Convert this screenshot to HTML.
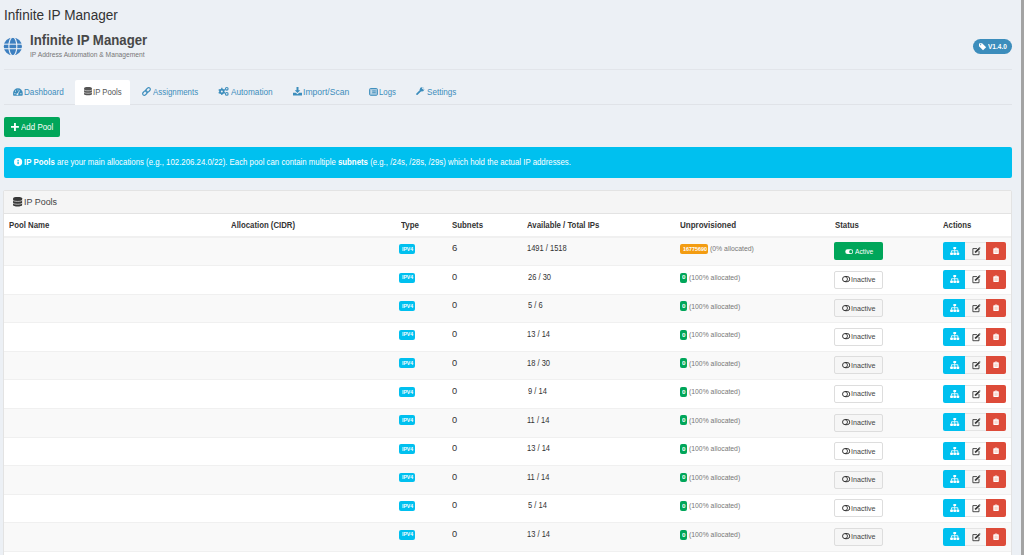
<!DOCTYPE html>
<html><head><meta charset="utf-8"><title>Infinite IP Manager</title>
<style>
html,body{margin:0;padding:0;}
body{width:1024px;height:555px;overflow:hidden;background:#ecf0f5;position:relative;font-family:"Liberation Sans",sans-serif;}
.t{position:absolute;line-height:1;white-space:nowrap;transform-origin:0 0;}
.b{position:absolute;}
.i{position:absolute;overflow:visible;}
</style></head><body>
<div class="t" style="left:3.84px;top:7.60px;font-size:14.535px;color:#333;transform:scaleX(0.9367);">Infinite IP Manager</div>
<svg class="i" style="left:3.40px;top:36.70px;width:19.70px;height:18.90px;" viewBox="0 0 20 20"><circle cx="10" cy="10" r="9.6" fill="#3c7fc0"/><ellipse cx="10" cy="10" rx="4.2" ry="9.9" fill="none" stroke="#ecf0f5" stroke-width="1.2"/><line x1="0" y1="7.6" x2="20" y2="7.6" stroke="#ecf0f5" stroke-width="1.1"/><line x1="0" y1="12.4" x2="20" y2="12.4" stroke="#ecf0f5" stroke-width="1.1"/></svg>
<div class="t" style="left:30.02px;top:33.10px;font-size:14.535px;color:#484848;font-weight:bold;transform:scaleX(0.9100);">Infinite IP Manager</div>
<div class="t" style="left:29.78px;top:51.87px;font-size:7.122px;color:#777;transform:scaleX(0.9395);">IP Address Automation &amp; Management</div>
<div class="b" style="left:972.70px;top:38.80px;width:39.30px;height:15.30px;background:#3c8dbc;border-radius:8px;"></div>
<svg class="i" style="left:978.50px;top:42.70px;width:7.60px;height:7.60px;" viewBox="0 0 16 16"><path d="M0 1.5V7l8.5 8.5 6.5-6.5L6.5 0.5H1z" fill="#fff"/><circle cx="3.5" cy="3.5" r="1.2" fill="#3c8dbc"/></svg>
<div class="t" style="left:987.86px;top:43.16px;font-size:7.849px;color:#fff;font-weight:bold;transform:scaleX(0.8335);">V1.4.0</div>
<div class="b" style="left:4.00px;top:69.00px;width:1008.00px;height:1.00px;background:#e2e5ea;"></div>
<div class="b" style="left:4.00px;top:103.80px;width:1008.00px;height:1.00px;background:#e0e3e8;"></div>
<div class="b" style="left:75.00px;top:79.80px;width:55.00px;height:24.80px;background:#fff;border-radius:2px 2px 0 0;"></div>
<svg class="i" style="left:13.30px;top:87.70px;width:9.80px;height:7.70px;color:#3c8dbc;--sep:#ecf0f5;" viewBox="0 0 20 16"><path d="M1.5 16Q0 16 0 14.5V10.5A10 10 0 0 1 20 10.5V14.5Q20 16 18.5 16Z" fill="currentColor"/><circle cx="3.8" cy="11.8" r="1.2" fill="#ecf0f5"/><circle cx="16.2" cy="11.8" r="1.2" fill="#ecf0f5"/><circle cx="5" cy="6.5" r="1.2" fill="#ecf0f5"/><circle cx="10" cy="4.2" r="1.1" fill="#ecf0f5"/><path d="M9 13.5L13.5 5" stroke="#ecf0f5" stroke-width="1.5"/><circle cx="9" cy="13" r="2" fill="#ecf0f5"/></svg>
<div class="t" style="left:24.33px;top:87.57px;font-size:9.012px;color:#3c8dbc;transform:scaleX(0.9026);">Dashboard</div>
<svg class="i" style="left:83.80px;top:87.20px;width:8.00px;height:8.30px;color:#555;--sep:#fff;" viewBox="0 0 16 17"><path d="M0 2.2C0 1 3.6 0 8 0s8 1 8 2.2v12.6c0 1.2-3.6 2.2-8 2.2s-8-1-8-2.2z" fill="currentColor"/><path d="M0 5.6c0 1.2 3.6 2.2 8 2.2s8-1 8-2.2M0 10.6c0 1.2 3.6 2.2 8 2.2s8-1 8-2.2" fill="none" stroke="var(--sep)" stroke-width="1.2"/></svg>
<div class="t" style="left:93.28px;top:87.57px;font-size:9.012px;color:#555;transform:scaleX(0.8610);">IP Pools</div>
<svg class="i" style="left:142.00px;top:87.00px;width:9.00px;height:9.00px;color:#3c8dbc;--sep:#ecf0f5;" viewBox="0 0 16 16"><rect x="-4.6" y="-2.9" width="9.2" height="5.8" rx="2.9" transform="translate(5.3 10.7) rotate(-45)" fill="none" stroke="currentColor" stroke-width="2.1"/><rect x="-4.6" y="-2.9" width="9.2" height="5.8" rx="2.9" transform="translate(10.7 5.3) rotate(-45)" fill="none" stroke="currentColor" stroke-width="2.1"/></svg>
<div class="t" style="left:152.88px;top:87.57px;font-size:9.012px;color:#3c8dbc;transform:scaleX(0.8762);">Assignments</div>
<svg class="i" style="left:218.30px;top:87.40px;width:10.70px;height:8.60px;color:#3c8dbc;--sep:#ecf0f5;" viewBox="0 0 21 17"><g fill="currentColor"><circle cx="7.5" cy="8.7" r="5.2"/><g stroke="currentColor" stroke-width="2.6"><path d="M7.5 1.6v14.2"/><path d="M1.35 5.15l12.3 7.1"/><path d="M1.35 12.25l12.3-7.1"/></g></g><circle cx="7.5" cy="8.7" r="2" fill="#ecf0f5"/><circle cx="17.3" cy="3.6" r="2.6" fill="none" stroke="currentColor" stroke-width="2.2"/><circle cx="17.3" cy="13.6" r="2.6" fill="none" stroke="currentColor" stroke-width="2.2"/></svg>
<div class="t" style="left:231.38px;top:87.57px;font-size:9.012px;color:#3c8dbc;transform:scaleX(0.9159);">Automation</div>
<svg class="i" style="left:293.00px;top:87.20px;width:9.00px;height:8.60px;color:#3c8dbc;--sep:#ecf0f5;" viewBox="0 0 18 17"><path d="M7 0h4v6.5h3.5L9 12 3.5 6.5H7z" fill="currentColor"/><path d="M0 11.5h5.5l3.5 3 3.5-3H18V17H0z" fill="currentColor"/></svg>
<div class="t" style="left:303.01px;top:87.57px;font-size:9.012px;color:#3c8dbc;transform:scaleX(0.9541);">Import/Scan</div>
<svg class="i" style="left:368.80px;top:87.70px;width:9.00px;height:7.80px;color:#3c8dbc;--sep:#ecf0f5;" viewBox="0 0 18 16"><rect x="1" y="1" width="16" height="14" rx="2" fill="currentColor" fill-opacity="0.4" stroke="currentColor" stroke-width="2"/><path d="M4.5 4.5v7" stroke="#ecf0f5" stroke-width="1"/><path d="M6.5 6h7M6.5 9.5h7" stroke="currentColor" stroke-width="1.6"/></svg>
<div class="t" style="left:379.36px;top:87.57px;font-size:9.012px;color:#3c8dbc;transform:scaleX(0.8660);">Logs</div>
<svg class="i" style="left:416.20px;top:87.30px;width:8.60px;height:8.10px;color:#3c8dbc;--sep:#ecf0f5;" viewBox="0 0 17 16"><path d="M2 14l7.5-7.5" stroke="currentColor" stroke-width="3.4" stroke-linecap="round"/><circle cx="11.8" cy="4.6" r="4.3" fill="currentColor"/><path d="M13 0.3l3.9 3.9-2.2 1.4-3.1-3.1z" fill="#ecf0f5"/></svg>
<div class="t" style="left:426.53px;top:87.57px;font-size:9.012px;color:#3c8dbc;transform:scaleX(0.9018);">Settings</div>
<div class="b" style="left:3.80px;top:116.60px;width:56.20px;height:20.60px;background:#00a65a;border-radius:2px;"></div>
<svg class="i" style="left:11.20px;top:122.90px;width:7.90px;height:7.90px;" viewBox="0 0 10 10"><path d="M5 0v10M0 5h10" stroke="#fff" stroke-width="2.3"/></svg>
<div class="t" style="left:20.88px;top:122.57px;font-size:9.012px;color:#fff;transform:scaleX(0.8845);">Add Pool</div>
<div class="b" style="left:3.80px;top:146.50px;width:1008.50px;height:31.30px;background:#00c0ef;border-radius:2px;"></div>
<svg class="i" style="left:13.50px;top:157.90px;width:8.20px;height:8.20px;" viewBox="0 0 16 16"><circle cx="8" cy="8" r="8" fill="#fff"/><rect x="6.7" y="7" width="2.6" height="5" fill="#00c0ef"/><rect x="6.7" y="3.6" width="2.6" height="2.3" fill="#00c0ef"/></svg>
<div class="t" style="left:23.68px;top:158.14px;font-size:8.576px;color:#fff;transform:scaleX(0.9139);"><b>IP Pools</b> are your main allocations (e.g., 102.206.24.0/22). Each pool can contain multiple <b>subnets</b> (e.g., /24s, /28s, /29s) which hold the actual IP addresses.</div>
<div class="b" style="left:3.30px;top:190.30px;width:1008.50px;height:380.00px;background:#fff;border:1px solid #e3e3e3;box-sizing:border-box;border-radius:2px;"></div>
<div class="b" style="left:4.30px;top:191.30px;width:1006.50px;height:22.50px;background:#f5f5f5;border-bottom:1px solid #e3e3e3;box-sizing:border-box;"></div>
<svg class="i" style="left:13.00px;top:196.90px;width:9.20px;height:9.60px;color:#383838;--sep:#f5f5f5;" viewBox="0 0 16 17"><path d="M0 2.2C0 1 3.6 0 8 0s8 1 8 2.2v12.6c0 1.2-3.6 2.2-8 2.2s-8-1-8-2.2z" fill="currentColor"/><path d="M0 5.6c0 1.2 3.6 2.2 8 2.2s8-1 8-2.2M0 10.6c0 1.2 3.6 2.2 8 2.2s8-1 8-2.2" fill="none" stroke="var(--sep)" stroke-width="1.2"/></svg>
<div class="t" style="left:23.58px;top:197.46px;font-size:9.738px;color:#444;transform:scaleX(0.9167);">IP Pools</div>
<div class="t" style="left:9.38px;top:220.94px;font-size:8.576px;color:#333;font-weight:bold;transform:scaleX(0.9114);">Pool Name</div>
<div class="t" style="left:231.31px;top:220.94px;font-size:8.576px;color:#333;font-weight:bold;transform:scaleX(0.9103);">Allocation (CIDR)</div>
<div class="t" style="left:400.51px;top:220.94px;font-size:8.576px;color:#333;font-weight:bold;transform:scaleX(0.9273);">Type</div>
<div class="t" style="left:452.47px;top:220.94px;font-size:8.576px;color:#333;font-weight:bold;transform:scaleX(0.9178);">Subnets</div>
<div class="t" style="left:527.01px;top:220.94px;font-size:8.576px;color:#333;font-weight:bold;transform:scaleX(0.9103);">Available / Total IPs</div>
<div class="t" style="left:680.12px;top:220.94px;font-size:8.576px;color:#333;font-weight:bold;transform:scaleX(0.9346);">Unprovisioned</div>
<div class="t" style="left:834.67px;top:220.94px;font-size:8.576px;color:#333;font-weight:bold;transform:scaleX(0.9137);">Status</div>
<div class="t" style="left:943.31px;top:220.94px;font-size:8.576px;color:#333;font-weight:bold;transform:scaleX(0.9035);">Actions</div>
<div class="b" style="left:4.30px;top:235.60px;width:1006.50px;height:1.10px;background:#f0f0f0;"></div>
<div class="b" style="left:4.30px;top:236.60px;width:1006.50px;height:28.56px;background:#f9f9f9;border-top:1px solid #f0f0f0;box-sizing:border-box;"></div>
<div class="b" style="left:399.30px;top:244.10px;width:15.50px;height:9.90px;background:#00c0ef;border-radius:2px;"></div>
<div class="t" style="left:401.96px;top:246.72px;font-size:5.523px;color:#fff;font-weight:bold;transform:scaleX(0.9330);">IPV4</div>
<div class="t" style="left:451.62px;top:244.36px;font-size:8.430px;color:#333;transform:scaleX(1.1311);">6</div>
<div class="t" style="left:527.33px;top:244.36px;font-size:8.430px;color:#333;transform:scaleX(0.8930);">1491 / 1518</div>
<div class="b" style="left:680.10px;top:244.10px;width:27.90px;height:9.80px;background:#f39c12;border-radius:2px;"></div>
<div class="t" style="left:682.66px;top:247.00px;font-size:5.669px;color:#fff;font-weight:bold;transform:scaleX(0.9500);">16775690</div>
<div class="t" style="left:709.87px;top:245.40px;font-size:7.558px;color:#777;transform:scaleX(0.9098);">(0% allocated)</div>
<div class="b" style="left:834.40px;top:242.20px;width:48.60px;height:18.00px;background:#00a65a;border-radius:2px;"></div>
<svg class="i" style="left:844.60px;top:248.80px;width:8.40px;height:5.30px;" viewBox="0 0 16 10"><rect x="0.5" y="0.5" width="15" height="9" rx="4.5" fill="#fff"/><circle cx="11" cy="5" r="3" fill="#00a65a"/></svg>
<div class="t" style="left:855.19px;top:247.58px;font-size:7.703px;color:#fff;transform:scaleX(0.8729);">Active</div>
<div class="b" style="left:943.10px;top:241.90px;width:22.00px;height:18.10px;background:#00c0ef;border-radius:2px 0 0 2px;"></div>
<svg class="i" style="left:950.00px;top:246.80px;width:9.40px;height:8.20px;" viewBox="0 0 16 14"><rect x="5.6" y="0" width="4.8" height="3.6" rx="0.8" fill="#fff"/><path d="M8 3.5v3M2.6 9.5V6.4h10.8V9.5M8 6.4V9.5" fill="none" stroke="#fff" stroke-width="1.4"/><rect x="0.2" y="9.2" width="4.8" height="4.6" rx="1.2" fill="#fff"/><rect x="5.6" y="9.2" width="4.8" height="4.6" rx="1.2" fill="#fff"/><rect x="11" y="9.2" width="4.8" height="4.6" rx="1.2" fill="#fff"/></svg>
<div class="b" style="left:965.10px;top:241.90px;width:21.00px;height:18.10px;background:rgba(0,0,0,0.012);border:1px solid #e4e4e4;border-left:0;border-right:0;box-sizing:border-box;"></div>
<svg class="i" style="left:971.60px;top:246.90px;width:8.70px;height:7.90px;" viewBox="0 0 14 13"><path d="M8 2.6H1.3v10.1h10.1V6.6" fill="none" stroke="#333" stroke-width="1.45"/><path d="M4.5 9.8l0.6-2.6 6-6 2 2-6 6z" fill="#333"/><path d="M11.6 0.7l1.7-0.2 0.2 1.7-0.6 0.6-1.9-1.9z" fill="#333"/></svg>
<div class="b" style="left:986.10px;top:241.90px;width:19.70px;height:18.10px;background:#dd4b39;border-radius:0 2px 2px 0;"></div>
<svg class="i" style="left:993.00px;top:246.90px;width:6.10px;height:7.60px;" viewBox="0 0 12 13"><path d="M4.5 0.8h3" stroke="#fff" stroke-width="1.2" stroke-linecap="round"/><rect x="0.6" y="1.6" width="10.8" height="11" rx="1.2" fill="#fff"/><rect x="3" y="4.2" width="6" height="6.4" fill="#f6cfc2"/><path d="M6 4.2v6.4" stroke="#fff" stroke-width="0.9"/></svg>
<div class="b" style="left:4.30px;top:265.16px;width:1006.50px;height:28.56px;background:#fff;border-top:1px solid #f0f0f0;box-sizing:border-box;"></div>
<div class="b" style="left:399.30px;top:272.66px;width:15.50px;height:9.90px;background:#00c0ef;border-radius:2px;"></div>
<div class="t" style="left:401.96px;top:275.28px;font-size:5.523px;color:#fff;font-weight:bold;transform:scaleX(0.9330);">IPV4</div>
<div class="t" style="left:451.74px;top:272.92px;font-size:8.430px;color:#333;transform:scaleX(1.0918);">0</div>
<div class="t" style="left:527.52px;top:272.92px;font-size:8.430px;color:#333;transform:scaleX(0.8930);">26 / 30</div>
<div class="b" style="left:680.00px;top:272.66px;width:7.00px;height:9.90px;background:#00a65a;border-radius:2px;"></div>
<div class="t" style="left:682.15px;top:275.46px;font-size:5.669px;color:#fff;font-weight:bold;transform:scaleX(1.1128);">0</div>
<div class="t" style="left:688.78px;top:273.96px;font-size:7.558px;color:#777;transform:scaleX(0.9035);">(100% allocated)</div>
<div class="b" style="left:834.40px;top:270.76px;width:48.60px;height:18.00px;background:#fff;border:1px solid #ddd;box-sizing:border-box;border-radius:2px;"></div>
<svg class="i" style="left:841.80px;top:276.36px;width:8.30px;height:6.20px;" viewBox="0 0 16 12"><rect x="1" y="1" width="14" height="10" rx="5" fill="none" stroke="#333" stroke-width="1.9"/><path d="M5.8 1.2A4.8 4.8 0 0 1 5.8 10.8" fill="none" stroke="#333" stroke-width="1.8"/></svg>
<div class="t" style="left:851.34px;top:276.14px;font-size:7.703px;color:#444;transform:scaleX(0.9257);">Inactive</div>
<div class="b" style="left:943.10px;top:270.46px;width:22.00px;height:18.10px;background:#00c0ef;border-radius:2px 0 0 2px;"></div>
<svg class="i" style="left:950.00px;top:275.36px;width:9.40px;height:8.20px;" viewBox="0 0 16 14"><rect x="5.6" y="0" width="4.8" height="3.6" rx="0.8" fill="#fff"/><path d="M8 3.5v3M2.6 9.5V6.4h10.8V9.5M8 6.4V9.5" fill="none" stroke="#fff" stroke-width="1.4"/><rect x="0.2" y="9.2" width="4.8" height="4.6" rx="1.2" fill="#fff"/><rect x="5.6" y="9.2" width="4.8" height="4.6" rx="1.2" fill="#fff"/><rect x="11" y="9.2" width="4.8" height="4.6" rx="1.2" fill="#fff"/></svg>
<div class="b" style="left:965.10px;top:270.46px;width:21.00px;height:18.10px;background:rgba(0,0,0,0.012);border:1px solid #e4e4e4;border-left:0;border-right:0;box-sizing:border-box;"></div>
<svg class="i" style="left:971.60px;top:275.46px;width:8.70px;height:7.90px;" viewBox="0 0 14 13"><path d="M8 2.6H1.3v10.1h10.1V6.6" fill="none" stroke="#333" stroke-width="1.45"/><path d="M4.5 9.8l0.6-2.6 6-6 2 2-6 6z" fill="#333"/><path d="M11.6 0.7l1.7-0.2 0.2 1.7-0.6 0.6-1.9-1.9z" fill="#333"/></svg>
<div class="b" style="left:986.10px;top:270.46px;width:19.70px;height:18.10px;background:#dd4b39;border-radius:0 2px 2px 0;"></div>
<svg class="i" style="left:993.00px;top:275.46px;width:6.10px;height:7.60px;" viewBox="0 0 12 13"><path d="M4.5 0.8h3" stroke="#fff" stroke-width="1.2" stroke-linecap="round"/><rect x="0.6" y="1.6" width="10.8" height="11" rx="1.2" fill="#fff"/><rect x="3" y="4.2" width="6" height="6.4" fill="#f6cfc2"/><path d="M6 4.2v6.4" stroke="#fff" stroke-width="0.9"/></svg>
<div class="b" style="left:4.30px;top:293.72px;width:1006.50px;height:28.56px;background:#f9f9f9;border-top:1px solid #f0f0f0;box-sizing:border-box;"></div>
<div class="b" style="left:399.30px;top:301.22px;width:15.50px;height:9.90px;background:#00c0ef;border-radius:2px;"></div>
<div class="t" style="left:401.96px;top:303.84px;font-size:5.523px;color:#fff;font-weight:bold;transform:scaleX(0.9330);">IPV4</div>
<div class="t" style="left:451.74px;top:301.48px;font-size:8.430px;color:#333;transform:scaleX(1.0918);">0</div>
<div class="t" style="left:527.60px;top:301.48px;font-size:8.430px;color:#333;transform:scaleX(0.8930);">5 / 6</div>
<div class="b" style="left:680.00px;top:301.22px;width:7.00px;height:9.90px;background:#00a65a;border-radius:2px;"></div>
<div class="t" style="left:682.15px;top:304.02px;font-size:5.669px;color:#fff;font-weight:bold;transform:scaleX(1.1128);">0</div>
<div class="t" style="left:688.78px;top:302.52px;font-size:7.558px;color:#777;transform:scaleX(0.9035);">(100% allocated)</div>
<div class="b" style="left:834.40px;top:299.32px;width:48.60px;height:18.00px;background:#fff;border:1px solid #ddd;box-sizing:border-box;border-radius:2px;background:#f6f6f6;"></div>
<svg class="i" style="left:841.80px;top:304.92px;width:8.30px;height:6.20px;" viewBox="0 0 16 12"><rect x="1" y="1" width="14" height="10" rx="5" fill="none" stroke="#333" stroke-width="1.9"/><path d="M5.8 1.2A4.8 4.8 0 0 1 5.8 10.8" fill="none" stroke="#333" stroke-width="1.8"/></svg>
<div class="t" style="left:851.34px;top:304.70px;font-size:7.703px;color:#444;transform:scaleX(0.9257);">Inactive</div>
<div class="b" style="left:943.10px;top:299.02px;width:22.00px;height:18.10px;background:#00c0ef;border-radius:2px 0 0 2px;"></div>
<svg class="i" style="left:950.00px;top:303.92px;width:9.40px;height:8.20px;" viewBox="0 0 16 14"><rect x="5.6" y="0" width="4.8" height="3.6" rx="0.8" fill="#fff"/><path d="M8 3.5v3M2.6 9.5V6.4h10.8V9.5M8 6.4V9.5" fill="none" stroke="#fff" stroke-width="1.4"/><rect x="0.2" y="9.2" width="4.8" height="4.6" rx="1.2" fill="#fff"/><rect x="5.6" y="9.2" width="4.8" height="4.6" rx="1.2" fill="#fff"/><rect x="11" y="9.2" width="4.8" height="4.6" rx="1.2" fill="#fff"/></svg>
<div class="b" style="left:965.10px;top:299.02px;width:21.00px;height:18.10px;background:rgba(0,0,0,0.012);border:1px solid #e4e4e4;border-left:0;border-right:0;box-sizing:border-box;"></div>
<svg class="i" style="left:971.60px;top:304.02px;width:8.70px;height:7.90px;" viewBox="0 0 14 13"><path d="M8 2.6H1.3v10.1h10.1V6.6" fill="none" stroke="#333" stroke-width="1.45"/><path d="M4.5 9.8l0.6-2.6 6-6 2 2-6 6z" fill="#333"/><path d="M11.6 0.7l1.7-0.2 0.2 1.7-0.6 0.6-1.9-1.9z" fill="#333"/></svg>
<div class="b" style="left:986.10px;top:299.02px;width:19.70px;height:18.10px;background:#dd4b39;border-radius:0 2px 2px 0;"></div>
<svg class="i" style="left:993.00px;top:304.02px;width:6.10px;height:7.60px;" viewBox="0 0 12 13"><path d="M4.5 0.8h3" stroke="#fff" stroke-width="1.2" stroke-linecap="round"/><rect x="0.6" y="1.6" width="10.8" height="11" rx="1.2" fill="#fff"/><rect x="3" y="4.2" width="6" height="6.4" fill="#f6cfc2"/><path d="M6 4.2v6.4" stroke="#fff" stroke-width="0.9"/></svg>
<div class="b" style="left:4.30px;top:322.28px;width:1006.50px;height:28.56px;background:#fff;border-top:1px solid #f0f0f0;box-sizing:border-box;"></div>
<div class="b" style="left:399.30px;top:329.78px;width:15.50px;height:9.90px;background:#00c0ef;border-radius:2px;"></div>
<div class="t" style="left:401.96px;top:332.40px;font-size:5.523px;color:#fff;font-weight:bold;transform:scaleX(0.9330);">IPV4</div>
<div class="t" style="left:451.74px;top:330.04px;font-size:8.430px;color:#333;transform:scaleX(1.0918);">0</div>
<div class="t" style="left:527.33px;top:330.04px;font-size:8.430px;color:#333;transform:scaleX(0.8930);">13 / 14</div>
<div class="b" style="left:680.00px;top:329.78px;width:7.00px;height:9.90px;background:#00a65a;border-radius:2px;"></div>
<div class="t" style="left:682.15px;top:332.58px;font-size:5.669px;color:#fff;font-weight:bold;transform:scaleX(1.1128);">0</div>
<div class="t" style="left:688.78px;top:331.08px;font-size:7.558px;color:#777;transform:scaleX(0.9035);">(100% allocated)</div>
<div class="b" style="left:834.40px;top:327.88px;width:48.60px;height:18.00px;background:#fff;border:1px solid #ddd;box-sizing:border-box;border-radius:2px;"></div>
<svg class="i" style="left:841.80px;top:333.48px;width:8.30px;height:6.20px;" viewBox="0 0 16 12"><rect x="1" y="1" width="14" height="10" rx="5" fill="none" stroke="#333" stroke-width="1.9"/><path d="M5.8 1.2A4.8 4.8 0 0 1 5.8 10.8" fill="none" stroke="#333" stroke-width="1.8"/></svg>
<div class="t" style="left:851.34px;top:333.26px;font-size:7.703px;color:#444;transform:scaleX(0.9257);">Inactive</div>
<div class="b" style="left:943.10px;top:327.58px;width:22.00px;height:18.10px;background:#00c0ef;border-radius:2px 0 0 2px;"></div>
<svg class="i" style="left:950.00px;top:332.48px;width:9.40px;height:8.20px;" viewBox="0 0 16 14"><rect x="5.6" y="0" width="4.8" height="3.6" rx="0.8" fill="#fff"/><path d="M8 3.5v3M2.6 9.5V6.4h10.8V9.5M8 6.4V9.5" fill="none" stroke="#fff" stroke-width="1.4"/><rect x="0.2" y="9.2" width="4.8" height="4.6" rx="1.2" fill="#fff"/><rect x="5.6" y="9.2" width="4.8" height="4.6" rx="1.2" fill="#fff"/><rect x="11" y="9.2" width="4.8" height="4.6" rx="1.2" fill="#fff"/></svg>
<div class="b" style="left:965.10px;top:327.58px;width:21.00px;height:18.10px;background:rgba(0,0,0,0.012);border:1px solid #e4e4e4;border-left:0;border-right:0;box-sizing:border-box;"></div>
<svg class="i" style="left:971.60px;top:332.58px;width:8.70px;height:7.90px;" viewBox="0 0 14 13"><path d="M8 2.6H1.3v10.1h10.1V6.6" fill="none" stroke="#333" stroke-width="1.45"/><path d="M4.5 9.8l0.6-2.6 6-6 2 2-6 6z" fill="#333"/><path d="M11.6 0.7l1.7-0.2 0.2 1.7-0.6 0.6-1.9-1.9z" fill="#333"/></svg>
<div class="b" style="left:986.10px;top:327.58px;width:19.70px;height:18.10px;background:#dd4b39;border-radius:0 2px 2px 0;"></div>
<svg class="i" style="left:993.00px;top:332.58px;width:6.10px;height:7.60px;" viewBox="0 0 12 13"><path d="M4.5 0.8h3" stroke="#fff" stroke-width="1.2" stroke-linecap="round"/><rect x="0.6" y="1.6" width="10.8" height="11" rx="1.2" fill="#fff"/><rect x="3" y="4.2" width="6" height="6.4" fill="#f6cfc2"/><path d="M6 4.2v6.4" stroke="#fff" stroke-width="0.9"/></svg>
<div class="b" style="left:4.30px;top:350.84px;width:1006.50px;height:28.56px;background:#f9f9f9;border-top:1px solid #f0f0f0;box-sizing:border-box;"></div>
<div class="b" style="left:399.30px;top:358.34px;width:15.50px;height:9.90px;background:#00c0ef;border-radius:2px;"></div>
<div class="t" style="left:401.96px;top:360.96px;font-size:5.523px;color:#fff;font-weight:bold;transform:scaleX(0.9330);">IPV4</div>
<div class="t" style="left:451.74px;top:358.60px;font-size:8.430px;color:#333;transform:scaleX(1.0918);">0</div>
<div class="t" style="left:527.33px;top:358.60px;font-size:8.430px;color:#333;transform:scaleX(0.8930);">18 / 30</div>
<div class="b" style="left:680.00px;top:358.34px;width:7.00px;height:9.90px;background:#00a65a;border-radius:2px;"></div>
<div class="t" style="left:682.15px;top:361.14px;font-size:5.669px;color:#fff;font-weight:bold;transform:scaleX(1.1128);">0</div>
<div class="t" style="left:688.78px;top:359.64px;font-size:7.558px;color:#777;transform:scaleX(0.9035);">(100% allocated)</div>
<div class="b" style="left:834.40px;top:356.44px;width:48.60px;height:18.00px;background:#fff;border:1px solid #ddd;box-sizing:border-box;border-radius:2px;background:#f6f6f6;"></div>
<svg class="i" style="left:841.80px;top:362.04px;width:8.30px;height:6.20px;" viewBox="0 0 16 12"><rect x="1" y="1" width="14" height="10" rx="5" fill="none" stroke="#333" stroke-width="1.9"/><path d="M5.8 1.2A4.8 4.8 0 0 1 5.8 10.8" fill="none" stroke="#333" stroke-width="1.8"/></svg>
<div class="t" style="left:851.34px;top:361.82px;font-size:7.703px;color:#444;transform:scaleX(0.9257);">Inactive</div>
<div class="b" style="left:943.10px;top:356.14px;width:22.00px;height:18.10px;background:#00c0ef;border-radius:2px 0 0 2px;"></div>
<svg class="i" style="left:950.00px;top:361.04px;width:9.40px;height:8.20px;" viewBox="0 0 16 14"><rect x="5.6" y="0" width="4.8" height="3.6" rx="0.8" fill="#fff"/><path d="M8 3.5v3M2.6 9.5V6.4h10.8V9.5M8 6.4V9.5" fill="none" stroke="#fff" stroke-width="1.4"/><rect x="0.2" y="9.2" width="4.8" height="4.6" rx="1.2" fill="#fff"/><rect x="5.6" y="9.2" width="4.8" height="4.6" rx="1.2" fill="#fff"/><rect x="11" y="9.2" width="4.8" height="4.6" rx="1.2" fill="#fff"/></svg>
<div class="b" style="left:965.10px;top:356.14px;width:21.00px;height:18.10px;background:rgba(0,0,0,0.012);border:1px solid #e4e4e4;border-left:0;border-right:0;box-sizing:border-box;"></div>
<svg class="i" style="left:971.60px;top:361.14px;width:8.70px;height:7.90px;" viewBox="0 0 14 13"><path d="M8 2.6H1.3v10.1h10.1V6.6" fill="none" stroke="#333" stroke-width="1.45"/><path d="M4.5 9.8l0.6-2.6 6-6 2 2-6 6z" fill="#333"/><path d="M11.6 0.7l1.7-0.2 0.2 1.7-0.6 0.6-1.9-1.9z" fill="#333"/></svg>
<div class="b" style="left:986.10px;top:356.14px;width:19.70px;height:18.10px;background:#dd4b39;border-radius:0 2px 2px 0;"></div>
<svg class="i" style="left:993.00px;top:361.14px;width:6.10px;height:7.60px;" viewBox="0 0 12 13"><path d="M4.5 0.8h3" stroke="#fff" stroke-width="1.2" stroke-linecap="round"/><rect x="0.6" y="1.6" width="10.8" height="11" rx="1.2" fill="#fff"/><rect x="3" y="4.2" width="6" height="6.4" fill="#f6cfc2"/><path d="M6 4.2v6.4" stroke="#fff" stroke-width="0.9"/></svg>
<div class="b" style="left:4.30px;top:379.40px;width:1006.50px;height:28.56px;background:#fff;border-top:1px solid #f0f0f0;box-sizing:border-box;"></div>
<div class="b" style="left:399.30px;top:386.90px;width:15.50px;height:9.90px;background:#00c0ef;border-radius:2px;"></div>
<div class="t" style="left:401.96px;top:389.52px;font-size:5.523px;color:#fff;font-weight:bold;transform:scaleX(0.9330);">IPV4</div>
<div class="t" style="left:451.74px;top:387.16px;font-size:8.430px;color:#333;transform:scaleX(1.0918);">0</div>
<div class="t" style="left:527.55px;top:387.16px;font-size:8.430px;color:#333;transform:scaleX(0.8930);">9 / 14</div>
<div class="b" style="left:680.00px;top:386.90px;width:7.00px;height:9.90px;background:#00a65a;border-radius:2px;"></div>
<div class="t" style="left:682.15px;top:389.70px;font-size:5.669px;color:#fff;font-weight:bold;transform:scaleX(1.1128);">0</div>
<div class="t" style="left:688.78px;top:388.20px;font-size:7.558px;color:#777;transform:scaleX(0.9035);">(100% allocated)</div>
<div class="b" style="left:834.40px;top:385.00px;width:48.60px;height:18.00px;background:#fff;border:1px solid #ddd;box-sizing:border-box;border-radius:2px;"></div>
<svg class="i" style="left:841.80px;top:390.60px;width:8.30px;height:6.20px;" viewBox="0 0 16 12"><rect x="1" y="1" width="14" height="10" rx="5" fill="none" stroke="#333" stroke-width="1.9"/><path d="M5.8 1.2A4.8 4.8 0 0 1 5.8 10.8" fill="none" stroke="#333" stroke-width="1.8"/></svg>
<div class="t" style="left:851.34px;top:390.38px;font-size:7.703px;color:#444;transform:scaleX(0.9257);">Inactive</div>
<div class="b" style="left:943.10px;top:384.70px;width:22.00px;height:18.10px;background:#00c0ef;border-radius:2px 0 0 2px;"></div>
<svg class="i" style="left:950.00px;top:389.60px;width:9.40px;height:8.20px;" viewBox="0 0 16 14"><rect x="5.6" y="0" width="4.8" height="3.6" rx="0.8" fill="#fff"/><path d="M8 3.5v3M2.6 9.5V6.4h10.8V9.5M8 6.4V9.5" fill="none" stroke="#fff" stroke-width="1.4"/><rect x="0.2" y="9.2" width="4.8" height="4.6" rx="1.2" fill="#fff"/><rect x="5.6" y="9.2" width="4.8" height="4.6" rx="1.2" fill="#fff"/><rect x="11" y="9.2" width="4.8" height="4.6" rx="1.2" fill="#fff"/></svg>
<div class="b" style="left:965.10px;top:384.70px;width:21.00px;height:18.10px;background:rgba(0,0,0,0.012);border:1px solid #e4e4e4;border-left:0;border-right:0;box-sizing:border-box;"></div>
<svg class="i" style="left:971.60px;top:389.70px;width:8.70px;height:7.90px;" viewBox="0 0 14 13"><path d="M8 2.6H1.3v10.1h10.1V6.6" fill="none" stroke="#333" stroke-width="1.45"/><path d="M4.5 9.8l0.6-2.6 6-6 2 2-6 6z" fill="#333"/><path d="M11.6 0.7l1.7-0.2 0.2 1.7-0.6 0.6-1.9-1.9z" fill="#333"/></svg>
<div class="b" style="left:986.10px;top:384.70px;width:19.70px;height:18.10px;background:#dd4b39;border-radius:0 2px 2px 0;"></div>
<svg class="i" style="left:993.00px;top:389.70px;width:6.10px;height:7.60px;" viewBox="0 0 12 13"><path d="M4.5 0.8h3" stroke="#fff" stroke-width="1.2" stroke-linecap="round"/><rect x="0.6" y="1.6" width="10.8" height="11" rx="1.2" fill="#fff"/><rect x="3" y="4.2" width="6" height="6.4" fill="#f6cfc2"/><path d="M6 4.2v6.4" stroke="#fff" stroke-width="0.9"/></svg>
<div class="b" style="left:4.30px;top:407.96px;width:1006.50px;height:28.56px;background:#f9f9f9;border-top:1px solid #f0f0f0;box-sizing:border-box;"></div>
<div class="b" style="left:399.30px;top:415.46px;width:15.50px;height:9.90px;background:#00c0ef;border-radius:2px;"></div>
<div class="t" style="left:401.96px;top:418.08px;font-size:5.523px;color:#fff;font-weight:bold;transform:scaleX(0.9330);">IPV4</div>
<div class="t" style="left:451.74px;top:415.72px;font-size:8.430px;color:#333;transform:scaleX(1.0918);">0</div>
<div class="t" style="left:527.33px;top:415.72px;font-size:8.430px;color:#333;transform:scaleX(0.8930);">11 / 14</div>
<div class="b" style="left:680.00px;top:415.46px;width:7.00px;height:9.90px;background:#00a65a;border-radius:2px;"></div>
<div class="t" style="left:682.15px;top:418.26px;font-size:5.669px;color:#fff;font-weight:bold;transform:scaleX(1.1128);">0</div>
<div class="t" style="left:688.78px;top:416.76px;font-size:7.558px;color:#777;transform:scaleX(0.9035);">(100% allocated)</div>
<div class="b" style="left:834.40px;top:413.56px;width:48.60px;height:18.00px;background:#fff;border:1px solid #ddd;box-sizing:border-box;border-radius:2px;background:#f6f6f6;"></div>
<svg class="i" style="left:841.80px;top:419.16px;width:8.30px;height:6.20px;" viewBox="0 0 16 12"><rect x="1" y="1" width="14" height="10" rx="5" fill="none" stroke="#333" stroke-width="1.9"/><path d="M5.8 1.2A4.8 4.8 0 0 1 5.8 10.8" fill="none" stroke="#333" stroke-width="1.8"/></svg>
<div class="t" style="left:851.34px;top:418.94px;font-size:7.703px;color:#444;transform:scaleX(0.9257);">Inactive</div>
<div class="b" style="left:943.10px;top:413.26px;width:22.00px;height:18.10px;background:#00c0ef;border-radius:2px 0 0 2px;"></div>
<svg class="i" style="left:950.00px;top:418.16px;width:9.40px;height:8.20px;" viewBox="0 0 16 14"><rect x="5.6" y="0" width="4.8" height="3.6" rx="0.8" fill="#fff"/><path d="M8 3.5v3M2.6 9.5V6.4h10.8V9.5M8 6.4V9.5" fill="none" stroke="#fff" stroke-width="1.4"/><rect x="0.2" y="9.2" width="4.8" height="4.6" rx="1.2" fill="#fff"/><rect x="5.6" y="9.2" width="4.8" height="4.6" rx="1.2" fill="#fff"/><rect x="11" y="9.2" width="4.8" height="4.6" rx="1.2" fill="#fff"/></svg>
<div class="b" style="left:965.10px;top:413.26px;width:21.00px;height:18.10px;background:rgba(0,0,0,0.012);border:1px solid #e4e4e4;border-left:0;border-right:0;box-sizing:border-box;"></div>
<svg class="i" style="left:971.60px;top:418.26px;width:8.70px;height:7.90px;" viewBox="0 0 14 13"><path d="M8 2.6H1.3v10.1h10.1V6.6" fill="none" stroke="#333" stroke-width="1.45"/><path d="M4.5 9.8l0.6-2.6 6-6 2 2-6 6z" fill="#333"/><path d="M11.6 0.7l1.7-0.2 0.2 1.7-0.6 0.6-1.9-1.9z" fill="#333"/></svg>
<div class="b" style="left:986.10px;top:413.26px;width:19.70px;height:18.10px;background:#dd4b39;border-radius:0 2px 2px 0;"></div>
<svg class="i" style="left:993.00px;top:418.26px;width:6.10px;height:7.60px;" viewBox="0 0 12 13"><path d="M4.5 0.8h3" stroke="#fff" stroke-width="1.2" stroke-linecap="round"/><rect x="0.6" y="1.6" width="10.8" height="11" rx="1.2" fill="#fff"/><rect x="3" y="4.2" width="6" height="6.4" fill="#f6cfc2"/><path d="M6 4.2v6.4" stroke="#fff" stroke-width="0.9"/></svg>
<div class="b" style="left:4.30px;top:436.52px;width:1006.50px;height:28.56px;background:#fff;border-top:1px solid #f0f0f0;box-sizing:border-box;"></div>
<div class="b" style="left:399.30px;top:444.02px;width:15.50px;height:9.90px;background:#00c0ef;border-radius:2px;"></div>
<div class="t" style="left:401.96px;top:446.64px;font-size:5.523px;color:#fff;font-weight:bold;transform:scaleX(0.9330);">IPV4</div>
<div class="t" style="left:451.74px;top:444.28px;font-size:8.430px;color:#333;transform:scaleX(1.0918);">0</div>
<div class="t" style="left:527.33px;top:444.28px;font-size:8.430px;color:#333;transform:scaleX(0.8930);">13 / 14</div>
<div class="b" style="left:680.00px;top:444.02px;width:7.00px;height:9.90px;background:#00a65a;border-radius:2px;"></div>
<div class="t" style="left:682.15px;top:446.82px;font-size:5.669px;color:#fff;font-weight:bold;transform:scaleX(1.1128);">0</div>
<div class="t" style="left:688.78px;top:445.32px;font-size:7.558px;color:#777;transform:scaleX(0.9035);">(100% allocated)</div>
<div class="b" style="left:834.40px;top:442.12px;width:48.60px;height:18.00px;background:#fff;border:1px solid #ddd;box-sizing:border-box;border-radius:2px;"></div>
<svg class="i" style="left:841.80px;top:447.72px;width:8.30px;height:6.20px;" viewBox="0 0 16 12"><rect x="1" y="1" width="14" height="10" rx="5" fill="none" stroke="#333" stroke-width="1.9"/><path d="M5.8 1.2A4.8 4.8 0 0 1 5.8 10.8" fill="none" stroke="#333" stroke-width="1.8"/></svg>
<div class="t" style="left:851.34px;top:447.50px;font-size:7.703px;color:#444;transform:scaleX(0.9257);">Inactive</div>
<div class="b" style="left:943.10px;top:441.82px;width:22.00px;height:18.10px;background:#00c0ef;border-radius:2px 0 0 2px;"></div>
<svg class="i" style="left:950.00px;top:446.72px;width:9.40px;height:8.20px;" viewBox="0 0 16 14"><rect x="5.6" y="0" width="4.8" height="3.6" rx="0.8" fill="#fff"/><path d="M8 3.5v3M2.6 9.5V6.4h10.8V9.5M8 6.4V9.5" fill="none" stroke="#fff" stroke-width="1.4"/><rect x="0.2" y="9.2" width="4.8" height="4.6" rx="1.2" fill="#fff"/><rect x="5.6" y="9.2" width="4.8" height="4.6" rx="1.2" fill="#fff"/><rect x="11" y="9.2" width="4.8" height="4.6" rx="1.2" fill="#fff"/></svg>
<div class="b" style="left:965.10px;top:441.82px;width:21.00px;height:18.10px;background:rgba(0,0,0,0.012);border:1px solid #e4e4e4;border-left:0;border-right:0;box-sizing:border-box;"></div>
<svg class="i" style="left:971.60px;top:446.82px;width:8.70px;height:7.90px;" viewBox="0 0 14 13"><path d="M8 2.6H1.3v10.1h10.1V6.6" fill="none" stroke="#333" stroke-width="1.45"/><path d="M4.5 9.8l0.6-2.6 6-6 2 2-6 6z" fill="#333"/><path d="M11.6 0.7l1.7-0.2 0.2 1.7-0.6 0.6-1.9-1.9z" fill="#333"/></svg>
<div class="b" style="left:986.10px;top:441.82px;width:19.70px;height:18.10px;background:#dd4b39;border-radius:0 2px 2px 0;"></div>
<svg class="i" style="left:993.00px;top:446.82px;width:6.10px;height:7.60px;" viewBox="0 0 12 13"><path d="M4.5 0.8h3" stroke="#fff" stroke-width="1.2" stroke-linecap="round"/><rect x="0.6" y="1.6" width="10.8" height="11" rx="1.2" fill="#fff"/><rect x="3" y="4.2" width="6" height="6.4" fill="#f6cfc2"/><path d="M6 4.2v6.4" stroke="#fff" stroke-width="0.9"/></svg>
<div class="b" style="left:4.30px;top:465.08px;width:1006.50px;height:28.56px;background:#f9f9f9;border-top:1px solid #f0f0f0;box-sizing:border-box;"></div>
<div class="b" style="left:399.30px;top:472.58px;width:15.50px;height:9.90px;background:#00c0ef;border-radius:2px;"></div>
<div class="t" style="left:401.96px;top:475.20px;font-size:5.523px;color:#fff;font-weight:bold;transform:scaleX(0.9330);">IPV4</div>
<div class="t" style="left:451.74px;top:472.84px;font-size:8.430px;color:#333;transform:scaleX(1.0918);">0</div>
<div class="t" style="left:527.33px;top:472.84px;font-size:8.430px;color:#333;transform:scaleX(0.8930);">11 / 14</div>
<div class="b" style="left:680.00px;top:472.58px;width:7.00px;height:9.90px;background:#00a65a;border-radius:2px;"></div>
<div class="t" style="left:682.15px;top:475.38px;font-size:5.669px;color:#fff;font-weight:bold;transform:scaleX(1.1128);">0</div>
<div class="t" style="left:688.78px;top:473.88px;font-size:7.558px;color:#777;transform:scaleX(0.9035);">(100% allocated)</div>
<div class="b" style="left:834.40px;top:470.68px;width:48.60px;height:18.00px;background:#fff;border:1px solid #ddd;box-sizing:border-box;border-radius:2px;background:#f6f6f6;"></div>
<svg class="i" style="left:841.80px;top:476.28px;width:8.30px;height:6.20px;" viewBox="0 0 16 12"><rect x="1" y="1" width="14" height="10" rx="5" fill="none" stroke="#333" stroke-width="1.9"/><path d="M5.8 1.2A4.8 4.8 0 0 1 5.8 10.8" fill="none" stroke="#333" stroke-width="1.8"/></svg>
<div class="t" style="left:851.34px;top:476.06px;font-size:7.703px;color:#444;transform:scaleX(0.9257);">Inactive</div>
<div class="b" style="left:943.10px;top:470.38px;width:22.00px;height:18.10px;background:#00c0ef;border-radius:2px 0 0 2px;"></div>
<svg class="i" style="left:950.00px;top:475.28px;width:9.40px;height:8.20px;" viewBox="0 0 16 14"><rect x="5.6" y="0" width="4.8" height="3.6" rx="0.8" fill="#fff"/><path d="M8 3.5v3M2.6 9.5V6.4h10.8V9.5M8 6.4V9.5" fill="none" stroke="#fff" stroke-width="1.4"/><rect x="0.2" y="9.2" width="4.8" height="4.6" rx="1.2" fill="#fff"/><rect x="5.6" y="9.2" width="4.8" height="4.6" rx="1.2" fill="#fff"/><rect x="11" y="9.2" width="4.8" height="4.6" rx="1.2" fill="#fff"/></svg>
<div class="b" style="left:965.10px;top:470.38px;width:21.00px;height:18.10px;background:rgba(0,0,0,0.012);border:1px solid #e4e4e4;border-left:0;border-right:0;box-sizing:border-box;"></div>
<svg class="i" style="left:971.60px;top:475.38px;width:8.70px;height:7.90px;" viewBox="0 0 14 13"><path d="M8 2.6H1.3v10.1h10.1V6.6" fill="none" stroke="#333" stroke-width="1.45"/><path d="M4.5 9.8l0.6-2.6 6-6 2 2-6 6z" fill="#333"/><path d="M11.6 0.7l1.7-0.2 0.2 1.7-0.6 0.6-1.9-1.9z" fill="#333"/></svg>
<div class="b" style="left:986.10px;top:470.38px;width:19.70px;height:18.10px;background:#dd4b39;border-radius:0 2px 2px 0;"></div>
<svg class="i" style="left:993.00px;top:475.38px;width:6.10px;height:7.60px;" viewBox="0 0 12 13"><path d="M4.5 0.8h3" stroke="#fff" stroke-width="1.2" stroke-linecap="round"/><rect x="0.6" y="1.6" width="10.8" height="11" rx="1.2" fill="#fff"/><rect x="3" y="4.2" width="6" height="6.4" fill="#f6cfc2"/><path d="M6 4.2v6.4" stroke="#fff" stroke-width="0.9"/></svg>
<div class="b" style="left:4.30px;top:493.64px;width:1006.50px;height:28.56px;background:#fff;border-top:1px solid #f0f0f0;box-sizing:border-box;"></div>
<div class="b" style="left:399.30px;top:501.14px;width:15.50px;height:9.90px;background:#00c0ef;border-radius:2px;"></div>
<div class="t" style="left:401.96px;top:503.76px;font-size:5.523px;color:#fff;font-weight:bold;transform:scaleX(0.9330);">IPV4</div>
<div class="t" style="left:451.74px;top:501.40px;font-size:8.430px;color:#333;transform:scaleX(1.0918);">0</div>
<div class="t" style="left:527.60px;top:501.40px;font-size:8.430px;color:#333;transform:scaleX(0.8930);">5 / 14</div>
<div class="b" style="left:680.00px;top:501.14px;width:7.00px;height:9.90px;background:#00a65a;border-radius:2px;"></div>
<div class="t" style="left:682.15px;top:503.94px;font-size:5.669px;color:#fff;font-weight:bold;transform:scaleX(1.1128);">0</div>
<div class="t" style="left:688.78px;top:502.44px;font-size:7.558px;color:#777;transform:scaleX(0.9035);">(100% allocated)</div>
<div class="b" style="left:834.40px;top:499.24px;width:48.60px;height:18.00px;background:#fff;border:1px solid #ddd;box-sizing:border-box;border-radius:2px;"></div>
<svg class="i" style="left:841.80px;top:504.84px;width:8.30px;height:6.20px;" viewBox="0 0 16 12"><rect x="1" y="1" width="14" height="10" rx="5" fill="none" stroke="#333" stroke-width="1.9"/><path d="M5.8 1.2A4.8 4.8 0 0 1 5.8 10.8" fill="none" stroke="#333" stroke-width="1.8"/></svg>
<div class="t" style="left:851.34px;top:504.62px;font-size:7.703px;color:#444;transform:scaleX(0.9257);">Inactive</div>
<div class="b" style="left:943.10px;top:498.94px;width:22.00px;height:18.10px;background:#00c0ef;border-radius:2px 0 0 2px;"></div>
<svg class="i" style="left:950.00px;top:503.84px;width:9.40px;height:8.20px;" viewBox="0 0 16 14"><rect x="5.6" y="0" width="4.8" height="3.6" rx="0.8" fill="#fff"/><path d="M8 3.5v3M2.6 9.5V6.4h10.8V9.5M8 6.4V9.5" fill="none" stroke="#fff" stroke-width="1.4"/><rect x="0.2" y="9.2" width="4.8" height="4.6" rx="1.2" fill="#fff"/><rect x="5.6" y="9.2" width="4.8" height="4.6" rx="1.2" fill="#fff"/><rect x="11" y="9.2" width="4.8" height="4.6" rx="1.2" fill="#fff"/></svg>
<div class="b" style="left:965.10px;top:498.94px;width:21.00px;height:18.10px;background:rgba(0,0,0,0.012);border:1px solid #e4e4e4;border-left:0;border-right:0;box-sizing:border-box;"></div>
<svg class="i" style="left:971.60px;top:503.94px;width:8.70px;height:7.90px;" viewBox="0 0 14 13"><path d="M8 2.6H1.3v10.1h10.1V6.6" fill="none" stroke="#333" stroke-width="1.45"/><path d="M4.5 9.8l0.6-2.6 6-6 2 2-6 6z" fill="#333"/><path d="M11.6 0.7l1.7-0.2 0.2 1.7-0.6 0.6-1.9-1.9z" fill="#333"/></svg>
<div class="b" style="left:986.10px;top:498.94px;width:19.70px;height:18.10px;background:#dd4b39;border-radius:0 2px 2px 0;"></div>
<svg class="i" style="left:993.00px;top:503.94px;width:6.10px;height:7.60px;" viewBox="0 0 12 13"><path d="M4.5 0.8h3" stroke="#fff" stroke-width="1.2" stroke-linecap="round"/><rect x="0.6" y="1.6" width="10.8" height="11" rx="1.2" fill="#fff"/><rect x="3" y="4.2" width="6" height="6.4" fill="#f6cfc2"/><path d="M6 4.2v6.4" stroke="#fff" stroke-width="0.9"/></svg>
<div class="b" style="left:4.30px;top:522.20px;width:1006.50px;height:28.56px;background:#f9f9f9;border-top:1px solid #f0f0f0;box-sizing:border-box;"></div>
<div class="b" style="left:399.30px;top:529.70px;width:15.50px;height:9.90px;background:#00c0ef;border-radius:2px;"></div>
<div class="t" style="left:401.96px;top:532.32px;font-size:5.523px;color:#fff;font-weight:bold;transform:scaleX(0.9330);">IPV4</div>
<div class="t" style="left:451.74px;top:529.96px;font-size:8.430px;color:#333;transform:scaleX(1.0918);">0</div>
<div class="t" style="left:527.33px;top:529.96px;font-size:8.430px;color:#333;transform:scaleX(0.8930);">13 / 14</div>
<div class="b" style="left:680.00px;top:529.70px;width:7.00px;height:9.90px;background:#00a65a;border-radius:2px;"></div>
<div class="t" style="left:682.15px;top:532.50px;font-size:5.669px;color:#fff;font-weight:bold;transform:scaleX(1.1128);">0</div>
<div class="t" style="left:688.78px;top:531.00px;font-size:7.558px;color:#777;transform:scaleX(0.9035);">(100% allocated)</div>
<div class="b" style="left:834.40px;top:527.80px;width:48.60px;height:18.00px;background:#fff;border:1px solid #ddd;box-sizing:border-box;border-radius:2px;background:#f6f6f6;"></div>
<svg class="i" style="left:841.80px;top:533.40px;width:8.30px;height:6.20px;" viewBox="0 0 16 12"><rect x="1" y="1" width="14" height="10" rx="5" fill="none" stroke="#333" stroke-width="1.9"/><path d="M5.8 1.2A4.8 4.8 0 0 1 5.8 10.8" fill="none" stroke="#333" stroke-width="1.8"/></svg>
<div class="t" style="left:851.34px;top:533.18px;font-size:7.703px;color:#444;transform:scaleX(0.9257);">Inactive</div>
<div class="b" style="left:943.10px;top:527.50px;width:22.00px;height:18.10px;background:#00c0ef;border-radius:2px 0 0 2px;"></div>
<svg class="i" style="left:950.00px;top:532.40px;width:9.40px;height:8.20px;" viewBox="0 0 16 14"><rect x="5.6" y="0" width="4.8" height="3.6" rx="0.8" fill="#fff"/><path d="M8 3.5v3M2.6 9.5V6.4h10.8V9.5M8 6.4V9.5" fill="none" stroke="#fff" stroke-width="1.4"/><rect x="0.2" y="9.2" width="4.8" height="4.6" rx="1.2" fill="#fff"/><rect x="5.6" y="9.2" width="4.8" height="4.6" rx="1.2" fill="#fff"/><rect x="11" y="9.2" width="4.8" height="4.6" rx="1.2" fill="#fff"/></svg>
<div class="b" style="left:965.10px;top:527.50px;width:21.00px;height:18.10px;background:rgba(0,0,0,0.012);border:1px solid #e4e4e4;border-left:0;border-right:0;box-sizing:border-box;"></div>
<svg class="i" style="left:971.60px;top:532.50px;width:8.70px;height:7.90px;" viewBox="0 0 14 13"><path d="M8 2.6H1.3v10.1h10.1V6.6" fill="none" stroke="#333" stroke-width="1.45"/><path d="M4.5 9.8l0.6-2.6 6-6 2 2-6 6z" fill="#333"/><path d="M11.6 0.7l1.7-0.2 0.2 1.7-0.6 0.6-1.9-1.9z" fill="#333"/></svg>
<div class="b" style="left:986.10px;top:527.50px;width:19.70px;height:18.10px;background:#dd4b39;border-radius:0 2px 2px 0;"></div>
<svg class="i" style="left:993.00px;top:532.50px;width:6.10px;height:7.60px;" viewBox="0 0 12 13"><path d="M4.5 0.8h3" stroke="#fff" stroke-width="1.2" stroke-linecap="round"/><rect x="0.6" y="1.6" width="10.8" height="11" rx="1.2" fill="#fff"/><rect x="3" y="4.2" width="6" height="6.4" fill="#f6cfc2"/><path d="M6 4.2v6.4" stroke="#fff" stroke-width="0.9"/></svg>
<div class="b" style="left:4.30px;top:550.76px;width:1006.50px;height:28.56px;background:#fff;border-top:1px solid #f0f0f0;box-sizing:border-box;"></div>
<div class="b" style="left:1021.00px;top:0.00px;width:3.00px;height:555.00px;background:#a3a3a3;"></div>

</body></html>
